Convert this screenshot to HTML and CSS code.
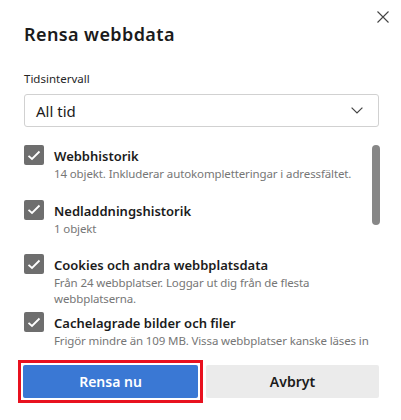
FILE: index.html
```html
<!DOCTYPE html>
<html lang="sv">
<head>
    <meta charset="UTF-8">
    <meta name="viewport" content="width=device-width, initial-scale=1.0">
    <title>Rensa webbdata</title>
    <link rel="stylesheet" href="styles.css">
</head>
<body>
<div class="dialog">
    <div class="header">
        <h1>Rensa webbdata</h1>
        <button class="close" aria-label="Stäng">
            <svg width="12" height="12" viewBox="0 0 12 12"><path d="M0.5 0.5 L11.5 11.5 M11.5 0.5 L0.5 11.5" stroke="#444" stroke-width="1.1" fill="none"/></svg>
        </button>
    </div>

    <label class="field-label" for="range">Tidsintervall</label>
    <div class="select" id="range">
        <span>All tid</span>
        <svg width="12" height="7" viewBox="0 0 12 7"><path d="M0.6 0.6 L6 6 L11.4 0.6" stroke="#444" stroke-width="1.2" fill="none"/></svg>
    </div>

    <div class="list-wrap">
        <div class="list">
            <div class="item">
                <span class="box"><svg width="14" height="11" viewBox="0 0 14 11"><path d="M1.5 5.8 L5 9 L12.5 1.5" stroke="#fff" stroke-width="1.8" fill="none"/></svg></span>
                <div class="text">
                    <div class="name">Webbhistorik</div>
                    <div class="desc">14 objekt. Inkluderar autokompletteringar i adressfältet.</div>
                </div>
            </div>
            <div class="item">
                <span class="box"><svg width="14" height="11" viewBox="0 0 14 11"><path d="M1.5 5.8 L5 9 L12.5 1.5" stroke="#fff" stroke-width="1.8" fill="none"/></svg></span>
                <div class="text">
                    <div class="name">Nedladdningshistorik</div>
                    <div class="desc">1 objekt</div>
                </div>
            </div>
            <div class="item">
                <span class="box"><svg width="14" height="11" viewBox="0 0 14 11"><path d="M1.5 5.8 L5 9 L12.5 1.5" stroke="#fff" stroke-width="1.8" fill="none"/></svg></span>
                <div class="text">
                    <div class="name">Cookies och andra webbplatsdata</div>
                    <div class="desc">Från 24 webbplatser. Loggar ut dig från de flesta webbplatserna.</div>
                </div>
            </div>
            <div class="item">
                <span class="box"><svg width="14" height="11" viewBox="0 0 14 11"><path d="M1.5 5.8 L5 9 L12.5 1.5" stroke="#fff" stroke-width="1.8" fill="none"/></svg></span>
                <div class="text">
                    <div class="name">Cachelagrade bilder och filer</div>
                    <div class="desc">Frigör mindre än 109 MB. Vissa webbplatser kanske läses in långsammare vid nästa besök.</div>
                </div>
            </div>
        </div>
        <div class="track"><div class="thumb"></div></div>
    </div>

    <div class="actions">
        <div class="highlight">
            <button class="btn primary">Rensa nu</button>
        </div>
        <button class="btn">Avbryt</button>
    </div>
</div>
</body>
</html>
```

FILE: styles.css
```css
* {
    margin: 0;
    padding: 0;
    box-sizing: border-box;
}

body {
    font-family: 'Noto Sans', 'Open Sans', Arial, sans-serif;
    color: #1b1b1b;
    background-color: #fff;
}

.dialog {
    width: 401px;
    height: 420px;
    padding: 0 22px 0 24px;
}

.header {
    display: flex;
    justify-content: space-between;
    align-items: flex-start;
}

h1 {
    font-size: 18px;
    font-weight: 600;
    line-height: 24px;
    margin-top: 22px;
    letter-spacing: 0.4px;
}

.close {
    width: 24px;
    height: 24px;
    margin-top: 5px;
    margin-right: -16px;
    border: none;
    background: none;
    display: flex;
    align-items: center;
    justify-content: center;
}

.field-label {
    display: block;
    font-size: 11.5px;
    line-height: 16px;
    margin-top: 25px;
    color: #262626;
}

.select {
    display: flex;
    justify-content: space-between;
    align-items: center;
    height: 33px;
    margin-top: 7px;
    padding: 0 15px 0 11px;
    border: 1px solid #d1d1d1;
    border-radius: 3px;
    font-size: 15px;
}

.list-wrap {
    display: flex;
    height: 205px;
    margin-top: 18px;
}

.list {
    flex: 1;
    overflow: hidden;
}

.item {
    display: flex;
    gap: 10px;
    min-height: 54.5px;
    padding-bottom: 5px;
}

.box {
    flex: none;
    width: 20px;
    height: 20px;
    border-radius: 2px;
    background-color: #6e6e6e;
    display: flex;
    align-items: center;
    justify-content: center;
}

.name {
    font-size: 13px;
    font-weight: 600;
    line-height: 20px;
    margin-top: 1px;
}

.desc {
    font-size: 11.5px;
    line-height: 16px;
    letter-spacing: -0.12px;
    color: #767676;
}

.track {
    width: 8px;
    margin-right: -1px;
}

.thumb {
    width: 8px;
    height: 80px;
    border-radius: 4px;
    background-color: #878787;
}

.actions {
    display: flex;
    gap: 3px;
    margin-top: 10px;
    margin-left: -6px;
}

.highlight {
    flex: none;
    width: 185px;
    border: 3px solid #e8111f;
    padding: 2px;
}

.btn {
    flex: 1;
    height: 33px;
    margin-top: 5px;
    border: none;
    border-radius: 2px;
    background-color: #ebebeb;
    color: #1b1b1b;
    font-family: inherit;
    font-size: 14px;
    font-weight: 600;
}

.primary {
    display: block;
    width: 100%;
    margin-top: 0;
    background-color: #3a78d4;
    color: #fff;
}
```
